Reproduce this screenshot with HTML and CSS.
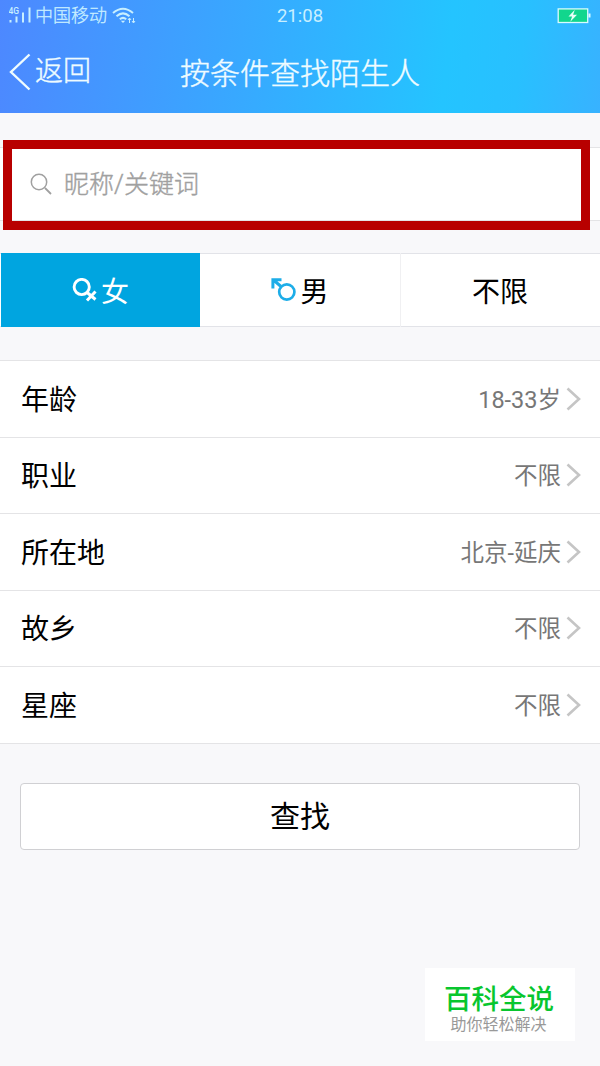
FILE: index.html
```html
<!doctype html>

<html lang="zh-CN">
  <head>
    <meta charset="utf-8"/>
    <title>按条件查找陌生人</title>
    <meta name="viewport" content="width=device-width,initial-scale=1.0"/>
    <link rel="stylesheet" href="styles.css">
  </head>
  <body>
    <header class="header">
      <div class="status">
        <div class="status__left">
          <svg class="status__signal" width="23" height="18" viewBox="0 0 23 18">
            <text class="status__4g" x="-.5" y="7.5">4G</text>
            <path d="M1.5 14v2.5M7.5 10.5v6M14 6.5v10M20.5 1.5v15" stroke="currentColor" stroke-width="2" fill="none"/>
          </svg>
          <span class="status__carrier">中国移动</span>
          <svg class="status__wifi" width="25" height="18" viewBox="0 0 25 18">
            <path d="M1 6Q11 -2.5 21 6M4.5 9.3Q11 3.5 17.5 9.3M7.8 12.2Q11 9.6 14.2 12.2" stroke="currentColor" stroke-width="2" fill="none"/>
            <path d="M8.8 13.7h4.4L11 16z" fill="currentColor"/>
            <path d="M17.5 16v-4.5M16 13l1.5-2 1.5 2M21.5 11v4.5M20 14l1.5 2 1.5-2" stroke="currentColor" stroke-width="1" fill="none"/>
          </svg>
        </div>
        <span class="status__time">21:08</span>
        <svg class="status__battery" width="34" height="16" viewBox="0 0 34 16">
          <rect x="1.2" y=".9" width="29.5" height="13.6" fill="#12d68d" stroke="#d9fbff" stroke-width="1.3"/>
          <path d="M31.5 5.5h2v4h-2z" fill="#d9fbff"/>
          <path d="M17.8 1.8l-6.3 6.7h3.6L13.3 13.8l6.7-7.1h-3.9z" fill="#e8fff8"/>
        </svg>
      </div>
      <div class="header__bar">
        <a class="back">
          <svg class="back__icon" width="22" height="38" viewBox="0 0 22 38">
            <path d="M20.5 1.5L2 19l18.5 17.5" stroke="currentColor" stroke-width="2.4" fill="none"/>
          </svg>
          返回
        </a>
        <h1 class="header__title">按条件查找陌生人</h1>
      </div>
    </header>

    <div class="search">
      <svg class="search__icon" width="22" height="22" viewBox="0 0 22 22">
        <path d="M15 15l6 6" stroke="currentColor" stroke-width="1.8"/>
        <circle cx="9" cy="9" r="7.7" stroke="currentColor" stroke-width="1.5" fill="none"/>
      </svg>
      <span class="search__placeholder">昵称/关键词</span>
      <div class="search__highlight"></div>
    </div>

    <div class="tabs">
      <a class="tabs__item tabs__item-active">
        <svg class="tabs__icon" width="25" height="24" viewBox="0 0 25 24">
          <circle cx="9.7" cy="9" r="7.6" stroke="currentColor" stroke-width="2.9" fill="none"/>
          <path d="M14.5 14l9 7.5M23.5 13.5l-8.5 9" stroke="currentColor" stroke-width="3"/>
        </svg>
        女
      </a>
      <a class="tabs__item">
        <svg class="tabs__icon tabs__icon-male" width="25" height="24" viewBox="0 0 25 24">
          <circle cx="15.8" cy="14" r="7.6" stroke="currentColor" stroke-width="2.7" fill="none"/>
          <path d="M10 8.5L2.5 2M1.9 10.5V1.8H10.5" stroke="currentColor" stroke-width="3" fill="none"/>
        </svg>
        男
      </a>
      <a class="tabs__item">不限</a>
    </div>

    <ul class="list">
      <li class="list__item">
        <span class="list__label">年龄</span>
        <span class="list__value">18-33岁</span>
        <svg class="list__arrow" width="15" height="24" viewBox="0 0 15 24"><path d="M1.5 1.5L13 12 1.5 22.5"/></svg>
      </li>
      <li class="list__item">
        <span class="list__label">职业</span>
        <span class="list__value">不限</span>
        <svg class="list__arrow" width="15" height="24" viewBox="0 0 15 24"><path d="M1.5 1.5L13 12 1.5 22.5"/></svg>
      </li>
      <li class="list__item">
        <span class="list__label">所在地</span>
        <span class="list__value">北京-延庆</span>
        <svg class="list__arrow" width="15" height="24" viewBox="0 0 15 24"><path d="M1.5 1.5L13 12 1.5 22.5"/></svg>
      </li>
      <li class="list__item">
        <span class="list__label">故乡</span>
        <span class="list__value">不限</span>
        <svg class="list__arrow" width="15" height="24" viewBox="0 0 15 24"><path d="M1.5 1.5L13 12 1.5 22.5"/></svg>
      </li>
      <li class="list__item">
        <span class="list__label">星座</span>
        <span class="list__value">不限</span>
        <svg class="list__arrow" width="15" height="24" viewBox="0 0 15 24"><path d="M1.5 1.5L13 12 1.5 22.5"/></svg>
      </li>
    </ul>

    <button class="submit">查找</button>

    <div class="brand">
      <p class="brand__name">百科全说</p>
      <p class="brand__text">助你轻松解决</p>
    </div>
  </body>
</html>
```
FILE: styles.css
```css
* {
  box-sizing: border-box;
}
body {
  font-family: Roboto, "Noto Sans CJK SC", sans-serif;
  font-size: 28px;
  color: #000;
  background-color: #f8f8fa;
  margin: 0;
  height: 1066px;
  position: relative;
  display: flex;
  flex-direction: column;
  overflow: hidden;
}
.header {
  height: 113px;
  flex-shrink: 0;
  color: #effcff;
  background: linear-gradient(97deg, #4d88ff 0%, #38a8ff 40%, #24c4ff 74%, #28c0ff 86%, #38b2ff 100%);
}
.status {
  display: grid;
  grid-template-columns: 1fr auto 1fr;
  align-items: center;
  height: 32px;
  padding: 0 9px;
  font-size: 18px;
  line-height: 30px;
  color: #c8efff;
}
.status__left {
  display: flex;
  align-items: center;
}
.status__signal {
  margin: -2px 3px 0 0;
}
.status__4g {
  font-size: 8.5px;
  font-weight: 500;
  fill: currentColor;
}
.status__carrier {
  font-weight: 300;
  -webkit-text-stroke: 0.3px;
}
.status__wifi {
  margin-left: 5px;
}
.status__time {
  font-size: 18.5px;
}
.status__battery {
  justify-self: end;
  margin-top: -1px;
}
.header__bar {
  display: grid;
  grid-template-columns: 1fr auto 1fr;
  align-items: center;
  height: 80px;
  padding: 0 9px;
}
.back {
  display: flex;
  align-items: center;
  gap: 4px;
  font-weight: 300;
  line-height: 40px;
  -webkit-text-stroke: 0.4px;
}
.back__icon {
  margin-top: -1px;
}
.header__title {
  margin: 0;
  padding-top: 3px;
  font-size: 30px;
  font-weight: 300;
  line-height: 40px;
  -webkit-text-stroke: 0.4px;
}
.search {
  position: relative;
  display: flex;
  align-items: center;
  flex-shrink: 0;
  height: 74px;
  margin-top: 34px;
  padding-left: 30px;
  color: #a0a0a0;
  background-color: #fff;
  border: solid #e4e4e6;
  border-width: 1px 0;
}
.search__placeholder {
  margin-left: 12px;
  padding-bottom: 4px;
  font-size: 25px;
  font-weight: 300;
  -webkit-text-stroke: 0.4px;
}
.search__highlight {
  position: absolute;
  top: -8px;
  left: 3px;
  width: 587px;
  height: 90px;
  border: 9px solid #b80000;
}
.tabs {
  display: grid;
  grid-template-columns: repeat(3, 1fr);
  flex-shrink: 0;
  height: 74px;
  margin-top: 32px;
  background-color: #fff;
  box-shadow: inset 0 1px #e2e3e8, inset 0 -1px #e2e3e8;
}
.tabs__item {
  display: flex;
  align-items: center;
  justify-content: center;
  gap: 4px;
}
.tabs__item:last-child {
  border-left: 1px solid #f0f0f2;
  padding-right: 1px;
}
.tabs__item-active {
  margin-left: 1px;
  color: #fff;
  background-color: #00a5e0;
}
.tabs__icon-male {
  color: #1dade8;
}
.list {
  flex-shrink: 0;
  margin: 33px 0 0;
  padding: 0;
  list-style: none;
  background-color: #fff;
  border-top: 1px solid #e4e4e6;
}
.list__item {
  display: flex;
  align-items: center;
  height: 76.5px;
  padding: 0 19px 0 21px;
  border-bottom: 1px solid #e4e4e6;
}
.list__label {
  padding-bottom: 2px;
}
.list__value {
  margin: 0 5px 0 auto;
  padding-bottom: 2px;
  font-size: 23.5px;
  color: #777;
}
.list__arrow {
  fill: none;
  stroke: #c5c5c5;
  stroke-width: 2.6;
}
.submit {
  flex-shrink: 0;
  height: 67px;
  margin: 39.4px 20px 0;
  padding: 0 0 4px;
  font-family: inherit;
  font-size: 30px;
  color: #000;
  background-color: #fff;
  border: 1px solid #d0d0d3;
  border-radius: 4px;
}
.brand {
  position: absolute;
  left: 425px;
  top: 968px;
  width: 150px;
  height: 73px;
  padding-top: 14px;
  text-align: center;
  background-color: #fff;
}
.brand__name {
  margin: 0 0 0 -2px;
  font-size: 27.5px;
  font-weight: 500;
  line-height: 36px;
  color: #08c62e;
}
.brand__text {
  margin: 0 0 0 -3px;
  font-size: 16px;
  line-height: 14px;
  color: #999;
}
```
